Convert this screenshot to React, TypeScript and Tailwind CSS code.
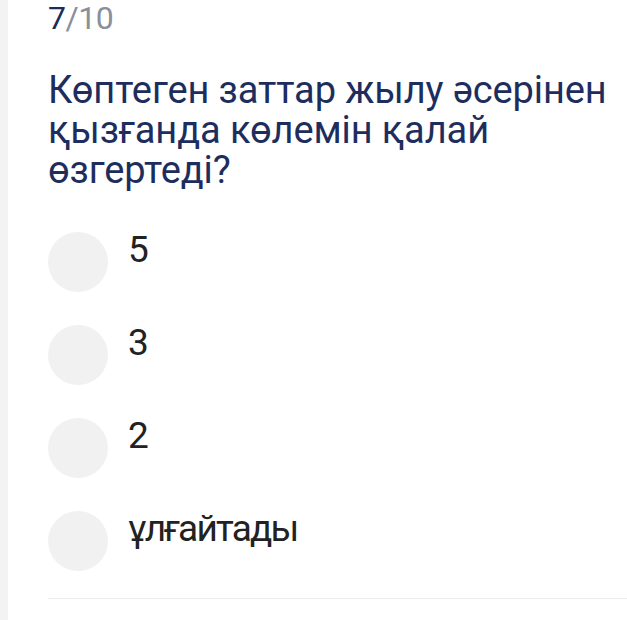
const options = ['5', '3', '2', 'ұлғайтады'];

export default function App() {
  return (
    <div className="flex h-[620px] w-[627px] overflow-hidden bg-white font-['Roboto',sans-serif]">
      <div className="w-[8px] shrink-0 bg-[#f3f3f3]" />
      <div className="flex-1 pl-[40px]">
        <div className="mt-[-2px] text-[32px] leading-[40px] tracking-[-0.5px]">
          <span className="text-[#1d2b57]">7</span>
          <span className="text-[#8a8f9c]">/10</span>
        </div>
        <h1 className="mt-[32px] text-[38px] leading-[40px] tracking-[-0.1px] text-[#1d2e5e]">
          Көптеген заттар жылу әсерінен қызғанда көлемін қалай өзгертеді?
        </h1>
        <div className="mt-[42px] flex flex-col gap-[33px]">
          {options.map((o) => (
            <div key={o} className="flex items-start gap-[20px]">
              <div className="h-[60px] w-[60px] shrink-0 rounded-full bg-[#f1f1f1]" />
              <div className="pt-[3px] text-[37px] leading-[30px] tracking-[-1.8px] text-[#222222]">{o}</div>
            </div>
          ))}
        </div>
        <div className="mt-[27px] h-[1px] bg-[#ececec]" />
      </div>
    </div>
  );
}
